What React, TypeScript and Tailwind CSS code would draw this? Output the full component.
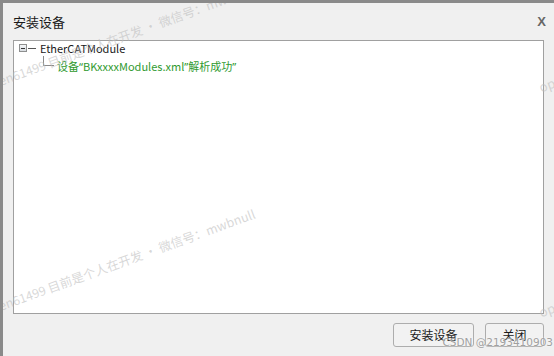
const cjk = "font-['Noto_Sans_CJK_SC','Noto_Sans',sans-serif]";

function Watermark({ top, left }: { top: number; left: number }) {
  return (
    <div
      className={`pointer-events-none absolute origin-left -rotate-[20deg] whitespace-nowrap text-[12.5px] leading-[18px] text-[#bdbdbd]/60 ${cjk}`}
      style={{ top, left }}
    >
      chen61499 目前是个人在开发 · 微信号：mwbnull
    </div>
  );
}

export default function App() {
  return (
    <div className="relative flex h-[356px] w-[554px] flex-col overflow-hidden border-l-[3px] border-t-[3px] border-[#8a8a8a] bg-[#f0f0f0]">
      {/* title bar */}
      <div className="flex h-[37px] items-center justify-between pl-[10px] pr-[8px]">
        <span className={`text-[13px] text-[#1a1a1a] ${cjk}`}>安装设备</span>
        <span className="font-['Liberation_Sans',sans-serif] text-[13px] font-bold text-[#666]">X</span>
      </div>

      {/* tree */}
      <div className="ml-[10px] mr-[10px] h-[274px] border border-[#a0a0a0] bg-white">
        <div className="flex h-[14px] items-center pl-[5px]">
          <div className="flex h-[8px] w-[8px] items-center justify-center border border-[#8e8f8f] bg-gradient-to-b from-[#f4f6f8] to-[#d8dde2]">
            <div className="h-px w-[4px] bg-[#333]" />
          </div>
          <div className="ml-px h-px w-[8px] bg-[#555]" />
          <span className={`ml-[4px] text-[11px] leading-[14px] text-[#1a1a1a] ${cjk}`}>EtherCATModule</span>
        </div>
        <div className="mt-[4px] flex h-[14px] items-start">
          <div className="-mt-[3px] ml-[29px] h-[10px] w-[11px] border-b border-l border-[#8a8a8a]" />
          <span className={`ml-[3px] text-[11px] leading-[14px] text-[#2f9a2f] ${cjk}`}>
            设备<span className="font-['Noto_Sans',sans-serif]">“</span>BKxxxxModules.xml<span className="font-['Noto_Sans',sans-serif]">”</span>解析成功<span className="font-['Noto_Sans',sans-serif]">”</span>
          </span>
        </div>
      </div>

      {/* buttons */}
      <div className="mt-[9px] flex justify-end gap-[11px] pr-[10px]">
        <button className={`h-[24px] w-[81px] rounded-[3px] border border-[#adadad] bg-[#f2f2f2] text-[12px] text-[#1a1a1a] ${cjk}`}>
          安装设备
        </button>
        <button className={`h-[24px] w-[59px] rounded-[3px] border border-[#adadad] bg-[#f2f2f2] text-[12px] text-[#1a1a1a] ${cjk}`}>
          关闭
        </button>
      </div>

      <Watermark top={74} left={-17} />
      <Watermark top={299} left={-17} />
      <div className={`pointer-events-none absolute left-[536px] top-[72px] -rotate-[20deg] text-[13px] text-[#bdbdbd]/60 ${cjk}`}>op</div>
      <div className={`pointer-events-none absolute left-[536px] top-[297px] -rotate-[20deg] text-[13px] text-[#bdbdbd]/60 ${cjk}`}>op</div>
      <div className="pointer-events-none absolute bottom-[8px] right-[1px] font-['DejaVu_Sans',sans-serif] text-[10.5px] leading-[12px] text-[#a0a0a0] [text-shadow:0_0_2px_#fff]">
        CSDN @2193410903
      </div>
    </div>
  );
}
